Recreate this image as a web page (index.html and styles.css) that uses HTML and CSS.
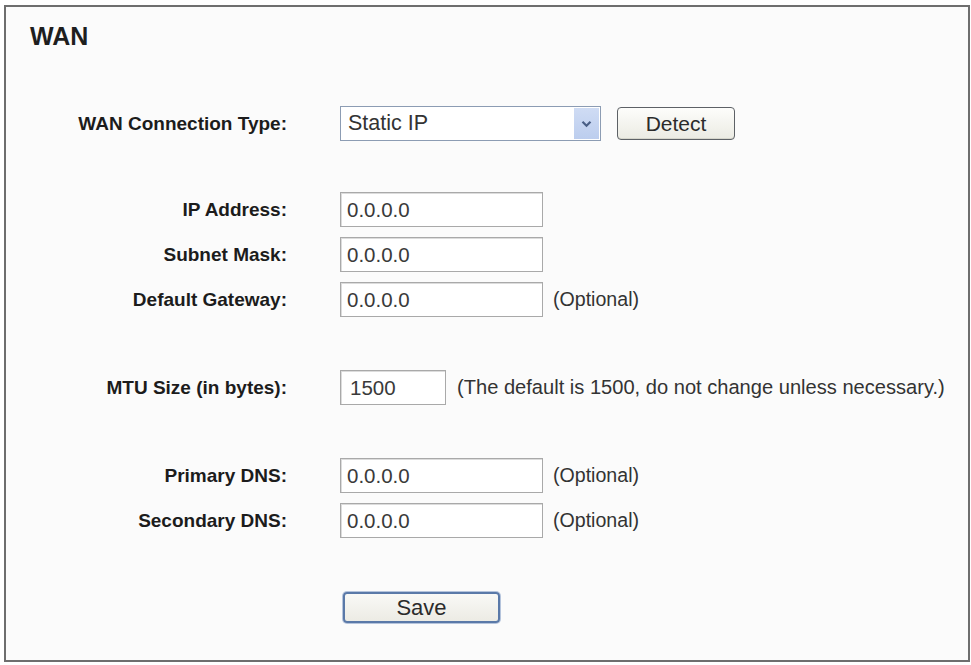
FILE: index.html
```html
<!DOCTYPE html>
<html lang="en">
<head>
<meta charset="utf-8">
<title>WAN</title>
<link rel="stylesheet" href="styles.css">
</head>
<body>
<div class="panel">
  <h1 class="title">WAN</h1>
  <div class="row conn">
    <div class="label">WAN Connection Type:</div>
    <div class="field">
      <div class="select">
        <span class="select-text">Static IP</span>
        <span class="select-btn">
          <svg width="11" height="8" viewBox="0 0 11 8"><path d="M1.5 1.8 L5.5 5.8 L9.5 1.8" fill="none" stroke="#4a5f86" stroke-width="2.2"/></svg>
        </span>
      </div>
      <button class="btn detect">Detect</button>
    </div>
  </div>

  <div class="group ip">
    <div class="row">
      <div class="label">IP Address:</div>
      <div class="field"><input class="input wide" type="text" value="0.0.0.0"></div>
    </div>
    <div class="row">
      <div class="label">Subnet Mask:</div>
      <div class="field"><input class="input wide" type="text" value="0.0.0.0"></div>
    </div>
    <div class="row">
      <div class="label">Default Gateway:</div>
      <div class="field"><input class="input wide" type="text" value="0.0.0.0"><span class="note">(Optional)</span></div>
    </div>
  </div>

  <div class="group mtu">
    <div class="row">
      <div class="label">MTU Size (in bytes):</div>
      <div class="field"><input class="input short" type="text" value="1500"><span class="note note-mtu">(The default is 1500, do not change unless necessary.)</span></div>
    </div>
  </div>

  <div class="group dns">
    <div class="row">
      <div class="label">Primary DNS:</div>
      <div class="field"><input class="input wide" type="text" value="0.0.0.0"><span class="note">(Optional)</span></div>
    </div>
    <div class="row">
      <div class="label">Secondary DNS:</div>
      <div class="field"><input class="input wide" type="text" value="0.0.0.0"><span class="note">(Optional)</span></div>
    </div>
  </div>

  <div class="row save-row">
    <div class="label"></div>
    <div class="field"><button class="btn save">Save</button></div>
  </div>
</div>
</body>
</html>
```

FILE: styles.css
```css
html, body {
  margin: 0;
  padding: 0;
  background: #ffffff;
}

body {
  font-family: "Liberation Sans", Arial, sans-serif;
  color: #2a2a2a;
}

.panel {
  box-sizing: border-box;
  margin: 5px 0 0 4px;
  width: 966px;
  height: 657px;
  border: 2px solid #6e6e6e;
  background: #fbfbfb;
  padding-top: 17px;
  display: flex;
  flex-direction: column;
}

.title {
  margin: 0 0 0 24px;
  font-size: 25px;
  line-height: 24px;
  font-weight: bold;
  color: #1e1e1e;
}

.row {
  display: grid;
  grid-template-columns: 281px 1fr;
  column-gap: 53px;
  align-items: center;
  height: 35px;
}

.label {
  text-align: right;
  font-size: 19px;
  font-weight: bold;
  color: #1c1c1c;
}

.field {
  display: flex;
  align-items: center;
  gap: 10px;
  height: 100%;
}

.conn {
  margin-top: 58px;
}

.group {
  display: flex;
  flex-direction: column;
  gap: 10px;
}

.ip {
  margin-top: 51px;
}

.mtu {
  margin-top: 53px;
}

.dns {
  margin-top: 53px;
}

.save-row {
  margin-top: 54px;
  height: 31px;
}

.input {
  box-sizing: border-box;
  height: 35px;
  margin: 0;
  padding: 0 0 0 6px;
  border: 1px solid #a9a9a9;
  box-shadow: inset 1px 1px 0 #dcdcdc;
  background: #ffffff;
  font-family: "Liberation Sans", Arial, sans-serif;
  font-size: 20.5px;
  color: #3a3a3a;
  outline: none;
}

.input.wide {
  width: 203px;
}

.input.short {
  width: 106px;
  padding-left: 9px;
}

.note {
  font-size: 19.6px;
  color: #333333;
}

.note-mtu {
  margin-left: 1px;
  font-size: 20.1px;
}

.select {
  box-sizing: border-box;
  width: 261px;
  height: 35px;
  border: 1px solid #8c9cb3;
  background: #ffffff;
  display: flex;
  align-items: center;
  justify-content: space-between;
  padding: 1px;
}

.select-text {
  padding-left: 6px;
  font-size: 21.5px;
  color: #333333;
}

.select-btn {
  width: 25px;
  height: 100%;
  background: linear-gradient(#cfdcf4, #bccdee);
  display: flex;
  align-items: center;
  justify-content: center;
}

.btn {
  box-sizing: border-box;
  margin: 0;
  font-family: "Liberation Sans", Arial, sans-serif;
  color: #2b2b2b;
  cursor: pointer;
}

.detect {
  margin-left: 6px;
  width: 118px;
  height: 33px;
  border: 1px solid #5d6166;
  border-radius: 4px;
  background: linear-gradient(#fdfdfb, #ebebe3);
  font-size: 21px;
  box-shadow: inset 0 -1px 0 #d6d6cc;
}

.save {
  margin-left: 3px;
  width: 157px;
  height: 31px;
  border: 2px solid #5a79a8;
  border-radius: 4px;
  background: linear-gradient(#f9f9f6, #ecebe4);
  font-size: 22px;
  line-height: 25px;
  padding: 0;
  box-shadow: 0 0 0 1px #b5c4dc;
}
```
